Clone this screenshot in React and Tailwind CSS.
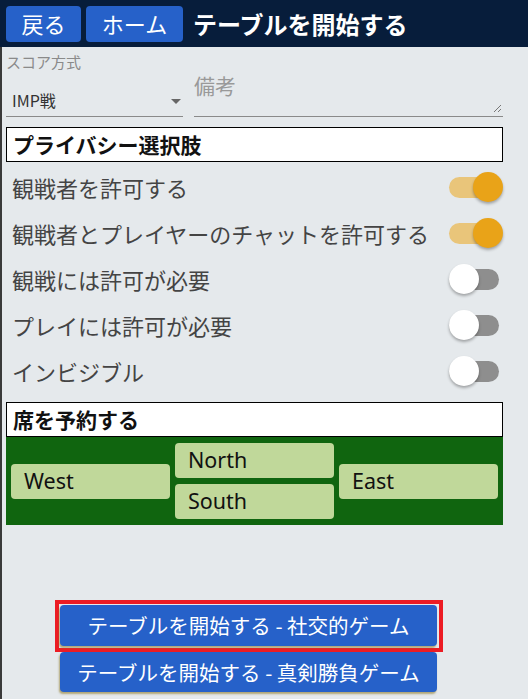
import React, { useState } from "react";

const font = "font-['Noto_Sans_CJK_JP','Noto_Sans',sans-serif]";

function Toggle({ on, onClick }) {
  return (
    <button onClick={onClick} className="relative w-[54px] h-[30px] shrink-0">
      <span
        className={
          "absolute left-0 top-[5px] w-[50px] h-[21px] rounded-full " +
          (on ? "bg-[#e9c57a]" : "bg-[#8e8e8e]")
        }
      />
      <span
        className={
          "absolute top-0 w-[30px] h-[30px] rounded-full shadow-[0_2px_3px_rgba(0,0,0,0.3)] " +
          (on ? "left-[24px] bg-[#e9a318]" : "left-0 bg-white")
        }
      />
    </button>
  );
}

function Seat({ name }) {
  return (
    <div className="w-[159px] h-[35px] rounded-[4px] bg-[#c0d89a] px-[13px] flex items-center text-[21.5px] text-[#111] font-['Noto_Sans',sans-serif]">
      {name}
    </div>
  );
}

export default function App() {
  const [opts, setOpts] = useState([
    { label: "観戦者を許可する", on: true },
    { label: "観戦者とプレイヤーのチャットを許可する", on: true },
    { label: "観戦には許可が必要", on: false },
    { label: "プレイには許可が必要", on: false },
    { label: "インビジブル", on: false },
  ]);

  const flip = (i) => {
    setOpts(opts.map((o, j) => (j === i ? { ...o, on: !o.on } : o)));
  };

  return (
    <div className={"w-[528px] h-[699px] flex flex-col bg-[#e5e9ec] " + font}>
      {/* header */}
      <div className="h-[47px] bg-[#071d3b] flex items-center pl-[6px] gap-[5px] shrink-0">
        <button className="w-[75px] h-[36px] rounded-[4px] bg-[#2661c9] text-white text-[22px]">
          戻る
        </button>
        <button className="w-[97px] h-[36px] rounded-[4px] bg-[#2661c9] text-white text-[22px]">
          ホーム
        </button>
        <h1 className="ml-[5px] text-white text-[24px] font-bold">テーブルを開始する</h1>
      </div>

      <div className="flex-1 flex flex-col border-l-2 border-[#3a3a3a] pl-[4px] pr-[25px]">
        {/* score + memo */}
        <div className="flex gap-[11px] h-[80px]">
          <div className="w-[177px] flex flex-col">
            <div className="mt-[6px] text-[15px] text-[#8a8a8a] leading-[18px]">スコア方式</div>
            <div className="mt-[13px] h-[33px] flex items-center justify-between border-b border-[#8a8a8a] pl-[6px] pr-[2px]">
              <span className="text-[16px] text-[#333]">IMP戦</span>
              <span className="w-0 h-0 border-x-[5px] border-x-transparent border-t-[5px] border-t-[#666] mt-[2px]" />
            </div>
          </div>
          <div className="flex-1 relative border-b border-[#8a8a8a] h-[70px]">
            <div className="absolute left-0 top-[26px] text-[21px] leading-[24px] text-[#999]">備考</div>
            <svg className="absolute right-[1px] bottom-[3px]" width="9" height="9" viewBox="0 0 9 9">
              <path d="M1 8 L8 1 M5 8 L8 5" stroke="#777" strokeWidth="1" />
            </svg>
          </div>
        </div>

        {/* privacy */}
        <div className="h-[35px] border border-black bg-white flex items-center px-[6px] text-[21px] font-bold text-[#111]">
          プライバシー選択肢
        </div>
        <div className="mt-[2px] flex flex-col">
          {opts.map((o, i) => (
            <div key={i} className="h-[46px] flex items-center justify-between pl-[6px]">
              <span className="text-[22px] text-[#444]">{o.label}</span>
              <Toggle on={o.on} onClick={() => flip(i)} />
            </div>
          ))}
        </div>

        {/* reserve seats */}
        <div className="mt-[8px] h-[35px] border border-black bg-white flex items-center px-[6px] text-[21px] font-bold text-[#111]">
          席を予約する
        </div>
        <div className="h-[88px] bg-[#10650f] flex items-center justify-between px-[5px]">
          <Seat name="West" />
          <div className="flex flex-col gap-[6px]">
            <Seat name="North" />
            <Seat name="South" />
          </div>
          <Seat name="East" />
        </div>

        {/* start buttons */}
        <div className="mt-auto mb-[7px] flex flex-col items-start pl-[49px]">
          <div className="border-[4px] border-[#ec1c24] p-[1px] pr-[2px] pb-[2px]">
            <button className="w-[377px] h-[41px] rounded-[4px] bg-[#2661c9] text-white text-[20.5px] shadow-[-1px_2px_2px_rgba(140,120,40,0.6)]">
              テーブルを開始する - 社交的ゲーム
            </button>
          </div>
          <button className="ml-[5px] w-[377px] h-[40px] rounded-[4px] bg-[#2661c9] text-white text-[20.5px] shadow-[-1px_2px_2px_rgba(140,120,40,0.6)]">
            テーブルを開始する - 真剣勝負ゲーム
          </button>
        </div>
      </div>
    </div>
  );
}
